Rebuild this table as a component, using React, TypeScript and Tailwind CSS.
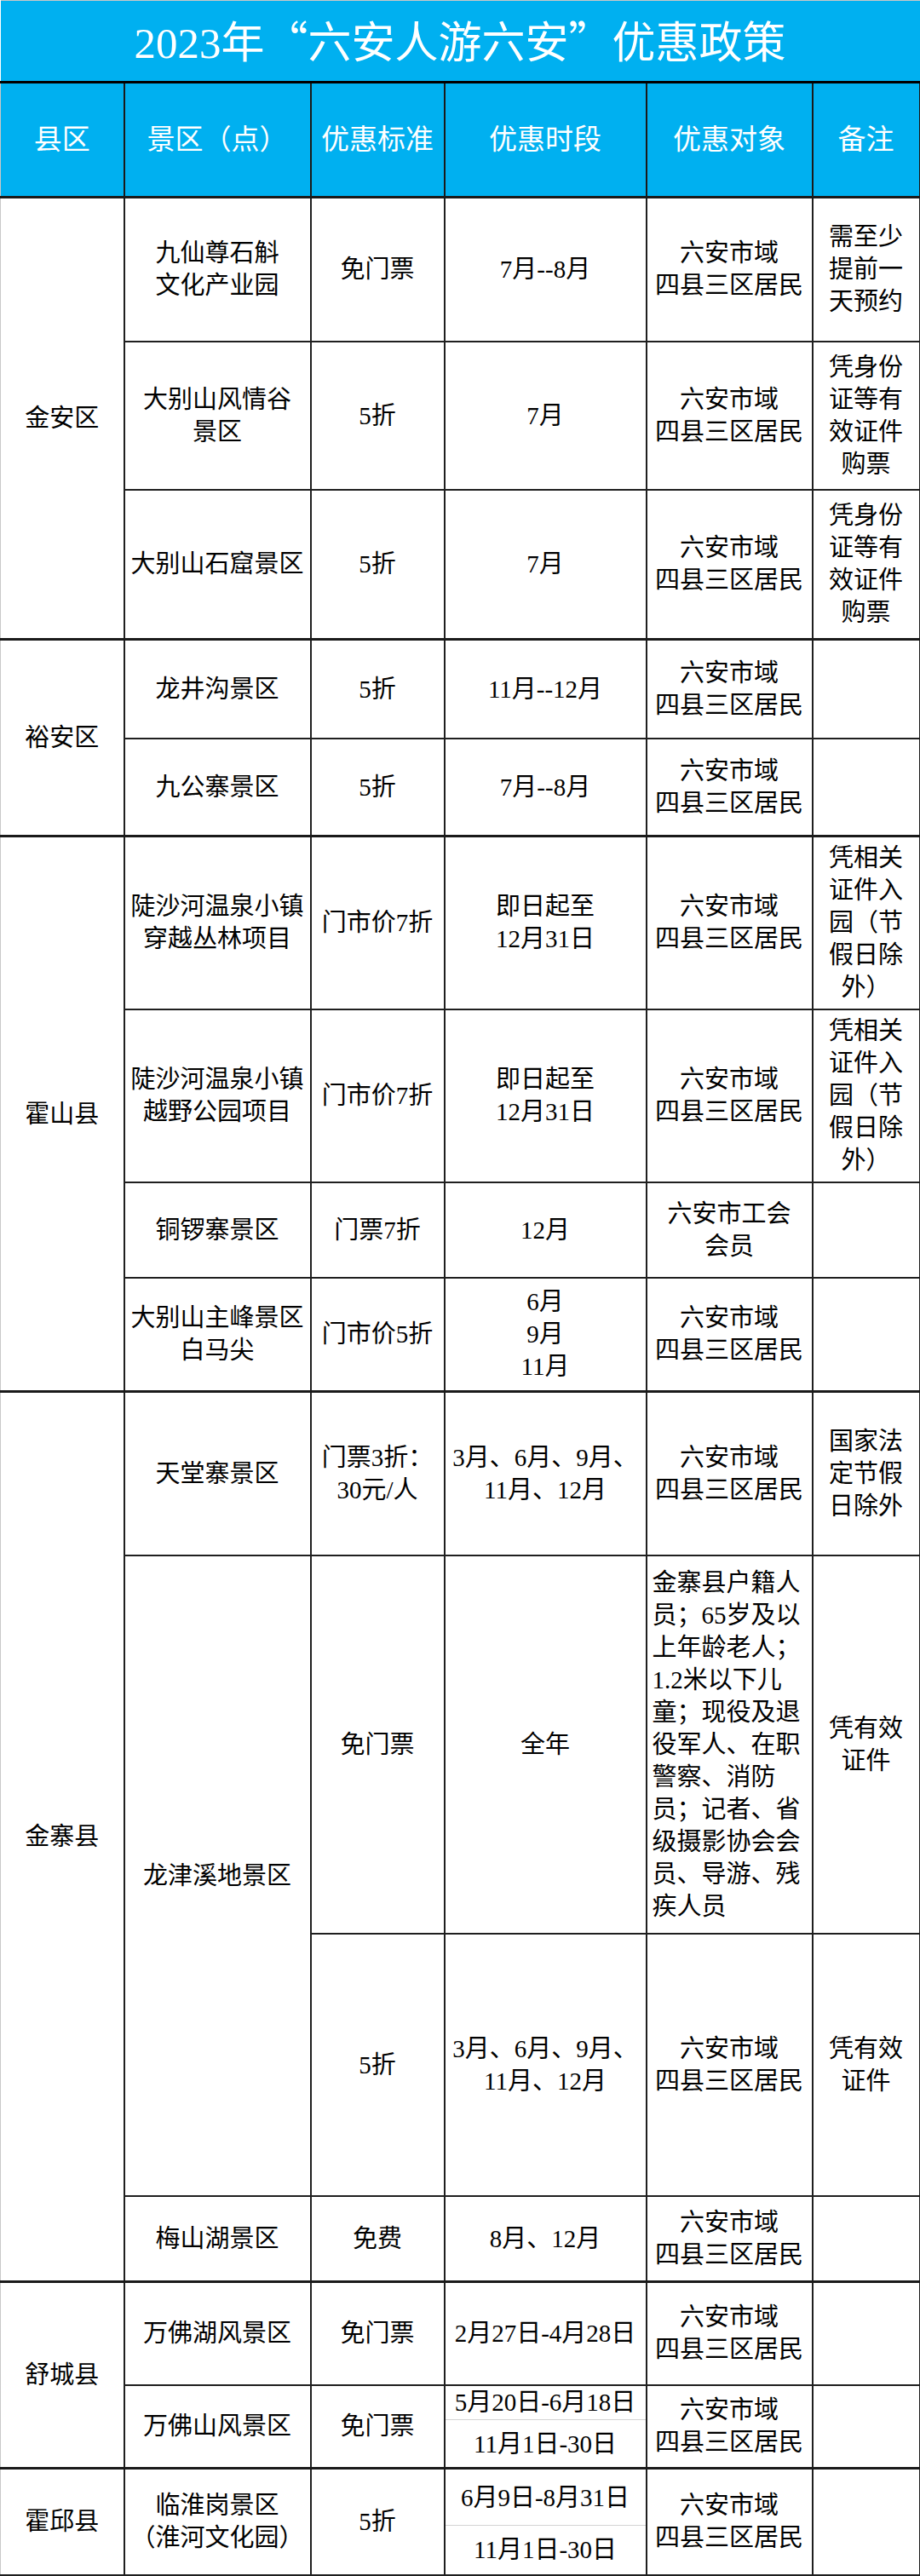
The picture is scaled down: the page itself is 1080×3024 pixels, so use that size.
import React from 'react'

type TdProps = {
    lines: string[]
    rowSpan?: number
    className?: string
}

const Td: React.FC<TdProps> = ({ lines, rowSpan, className = '' }) => (
    <td
        rowSpan={rowSpan}
        className={`border-2 border-[#1f1f1f] p-0 text-center align-middle whitespace-nowrap ${className}`}
    >
        {lines.map((l, i) => (
            <div key={i}>{l}</div>
        ))}
    </td>
)

const target = ['六安市域', '四县三区居民']
const idRemark = ['凭身份', '证等有', '效证件', '购票']
const parkRemark = ['凭相关', '证件入', '园（节', '假日除', '外）']
const months = ['3月、6月、9月、', '11月、12月']

const headers = ['县区', '景区（点）', '优惠标准', '优惠时段', '优惠对象', '备注']

const App: React.FC = () => {
    return (
        <div className="w-[1080px] min-h-[3024px] bg-white font-['Liberation_Serif','Noto_Sans_CJK_SC',serif] text-black">
            <table className="w-[1079px] table-fixed border-collapse text-[29px] leading-[38px]">
                <colgroup>
                    <col className="w-[145px]" />
                    <col className="w-[219px]" />
                    <col className="w-[157px]" />
                    <col className="w-[237px]" />
                    <col className="w-[195px]" />
                    <col className="w-[126px]" />
                </colgroup>
                <tbody>
                    <tr className="h-[96px]">
                        <td
                            colSpan={6}
                            className="border-t border-t-[#c8c8c8] border-b-[3px] border-b-black bg-[#00b0f0] p-0 text-center align-middle text-[51px] leading-[60px] text-white"
                        >
                            2023年<span className="font-['Noto_Sans_CJK_SC'] [font-feature-settings:'fwid']">“</span>六安人游六安<span className="font-['Noto_Sans_CJK_SC'] [font-feature-settings:'fwid']">”</span>优惠政策
                        </td>
                    </tr>
                    <tr className="h-[135px] border-b-[3px] border-[#1a1a1a]">
                        {headers.map((h, i) => (
                            <td
                                key={h}
                                className={`border-2 border-[#1a1a1a] bg-[#00b0f0] p-0 text-center align-middle text-[33px] text-white ${i === 0 ? 'border-l border-l-[#c8c8c8]' : ''}`}
                            >
                                {h}
                            </td>
                        ))}
                    </tr>

                    {/* 金安区 */}
                    <tr className="h-[169px]">
                        <Td lines={['金安区']} rowSpan={3} className="border-l border-l-[#c8c8c8]" />
                        <Td lines={['九仙尊石斛', '文化产业园']} />
                        <Td lines={['免门票']} />
                        <Td lines={['7月--8月']} />
                        <Td lines={target} />
                        <Td lines={['需至少', '提前一', '天预约']} />
                    </tr>
                    <tr className="h-[174px]">
                        <Td lines={['大别山风情谷', '景区']} />
                        <Td lines={['5折']} />
                        <Td lines={['7月']} />
                        <Td lines={target} />
                        <Td lines={idRemark} />
                    </tr>
                    <tr className="h-[176px]">
                        <Td lines={['大别山石窟景区']} />
                        <Td lines={['5折']} />
                        <Td lines={['7月']} />
                        <Td lines={target} />
                        <Td lines={idRemark} />
                    </tr>

                    {/* 裕安区 */}
                    <tr className="h-[116px] border-t-[3px] border-[#1a1a1a]">
                        <Td lines={['裕安区']} rowSpan={2} className="border-l border-l-[#c8c8c8]" />
                        <Td lines={['龙井沟景区']} />
                        <Td lines={['5折']} />
                        <Td lines={['11月--12月']} />
                        <Td lines={target} />
                        <Td lines={['']} />
                    </tr>
                    <tr className="h-[115px]">
                        <Td lines={['九公寨景区']} />
                        <Td lines={['5折']} />
                        <Td lines={['7月--8月']} />
                        <Td lines={target} />
                        <Td lines={['']} />
                    </tr>

                    {/* 霍山县 */}
                    <tr className="h-[203px] border-t-[3px] border-[#1a1a1a]">
                        <Td lines={['霍山县']} rowSpan={4} className="border-l border-l-[#c8c8c8]" />
                        <Td lines={['陡沙河温泉小镇', '穿越丛林项目']} />
                        <Td lines={['门市价7折']} />
                        <Td lines={['即日起至', '12月31日']} />
                        <Td lines={target} />
                        <Td lines={parkRemark} />
                    </tr>
                    <tr className="h-[203px]">
                        <Td lines={['陡沙河温泉小镇', '越野公园项目']} />
                        <Td lines={['门市价7折']} />
                        <Td lines={['即日起至', '12月31日']} />
                        <Td lines={target} />
                        <Td lines={parkRemark} />
                    </tr>
                    <tr className="h-[112px]">
                        <Td lines={['铜锣寨景区']} />
                        <Td lines={['门票7折']} />
                        <Td lines={['12月']} />
                        <Td lines={['六安市工会', '会员']} />
                        <Td lines={['']} />
                    </tr>
                    <tr className="h-[134px]">
                        <Td lines={['大别山主峰景区', '白马尖']} />
                        <Td lines={['门市价5折']} />
                        <Td lines={['6月', '9月', '11月']} className="leading-[38px]" />
                        <Td lines={target} />
                        <Td lines={['']} />
                    </tr>

                    {/* 金寨县 */}
                    <tr className="h-[192px] border-t-[3px] border-[#1a1a1a]">
                        <Td lines={['金寨县']} rowSpan={4} className="border-l border-l-[#c8c8c8]" />
                        <Td lines={['天堂寨景区']} />
                        <Td lines={['门票3折：', '30元/人']} />
                        <Td lines={months} />
                        <Td lines={target} />
                        <Td lines={['国家法', '定节假', '日除外']} />
                    </tr>
                    <tr className="h-[444px]">
                        <Td lines={['龙津溪地景区']} rowSpan={2} />
                        <Td lines={['免门票']} />
                        <Td lines={['全年']} />
                        <Td
                            lines={[
                                '金寨县户籍人',
                                '员；65岁及以',
                                '上年龄老人；',
                                '1.2米以下儿',
                                '童；现役及退',
                                '役军人、在职',
                                '警察、消防',
                                '员；记者、省',
                                '级摄影协会会',
                                '员、导游、残',
                                '疾人员',
                            ]}
                            className="!text-left pl-[6px]"
                        />
                        <Td lines={['凭有效', '证件']} />
                    </tr>
                    <tr className="h-[308px]">
                        <Td lines={['5折']} />
                        <Td lines={months} />
                        <Td lines={target} />
                        <Td lines={['凭有效', '证件']} />
                    </tr>
                    <tr className="h-[101px]">
                        <Td lines={['梅山湖景区']} />
                        <Td lines={['免费']} />
                        <Td lines={['8月、12月']} />
                        <Td lines={target} />
                        <Td lines={['']} />
                    </tr>

                    {/* 舒城县 */}
                    <tr className="h-[121px] border-t-[3px] border-[#1a1a1a]">
                        <Td lines={['舒城县']} rowSpan={3} className="border-l border-l-[#c8c8c8]" />
                        <Td lines={['万佛湖风景区']} />
                        <Td lines={['免门票']} />
                        <Td lines={['2月27日-4月28日']} />
                        <Td lines={target} />
                        <Td lines={['']} />
                    </tr>
                    <tr className="h-[41px]">
                        <Td lines={['万佛山风景区']} rowSpan={2} />
                        <Td lines={['免门票']} rowSpan={2} />
                        <Td lines={['5月20日-6月18日']} className="border-b border-b-[#d4d4d4]" />
                        <Td lines={target} rowSpan={2} />
                        <Td lines={['']} rowSpan={2} />
                    </tr>
                    <tr className="h-[57px]">
                        <Td lines={['11月1日-30日']} className="border-t border-t-[#d4d4d4]" />
                    </tr>

                    {/* 霍邱县 */}
                    <tr className="h-[67px] border-t-[3px] border-[#1a1a1a]">
                        <Td lines={['霍邱县']} rowSpan={2} className="border-l border-l-[#c8c8c8]" />
                        <Td lines={['临淮岗景区', '（淮河文化园）']} rowSpan={2} />
                        <Td lines={['5折']} rowSpan={2} />
                        <Td lines={['6月9日-8月31日']} className="border-b border-b-[#d4d4d4]" />
                        <Td lines={target} rowSpan={2} />
                        <Td lines={['']} rowSpan={2} />
                    </tr>
                    <tr className="h-[58px]">
                        <Td lines={['11月1日-30日']} className="border-t border-t-[#d4d4d4]" />
                    </tr>
                </tbody>
            </table>
        </div>
    )
}

export default App
